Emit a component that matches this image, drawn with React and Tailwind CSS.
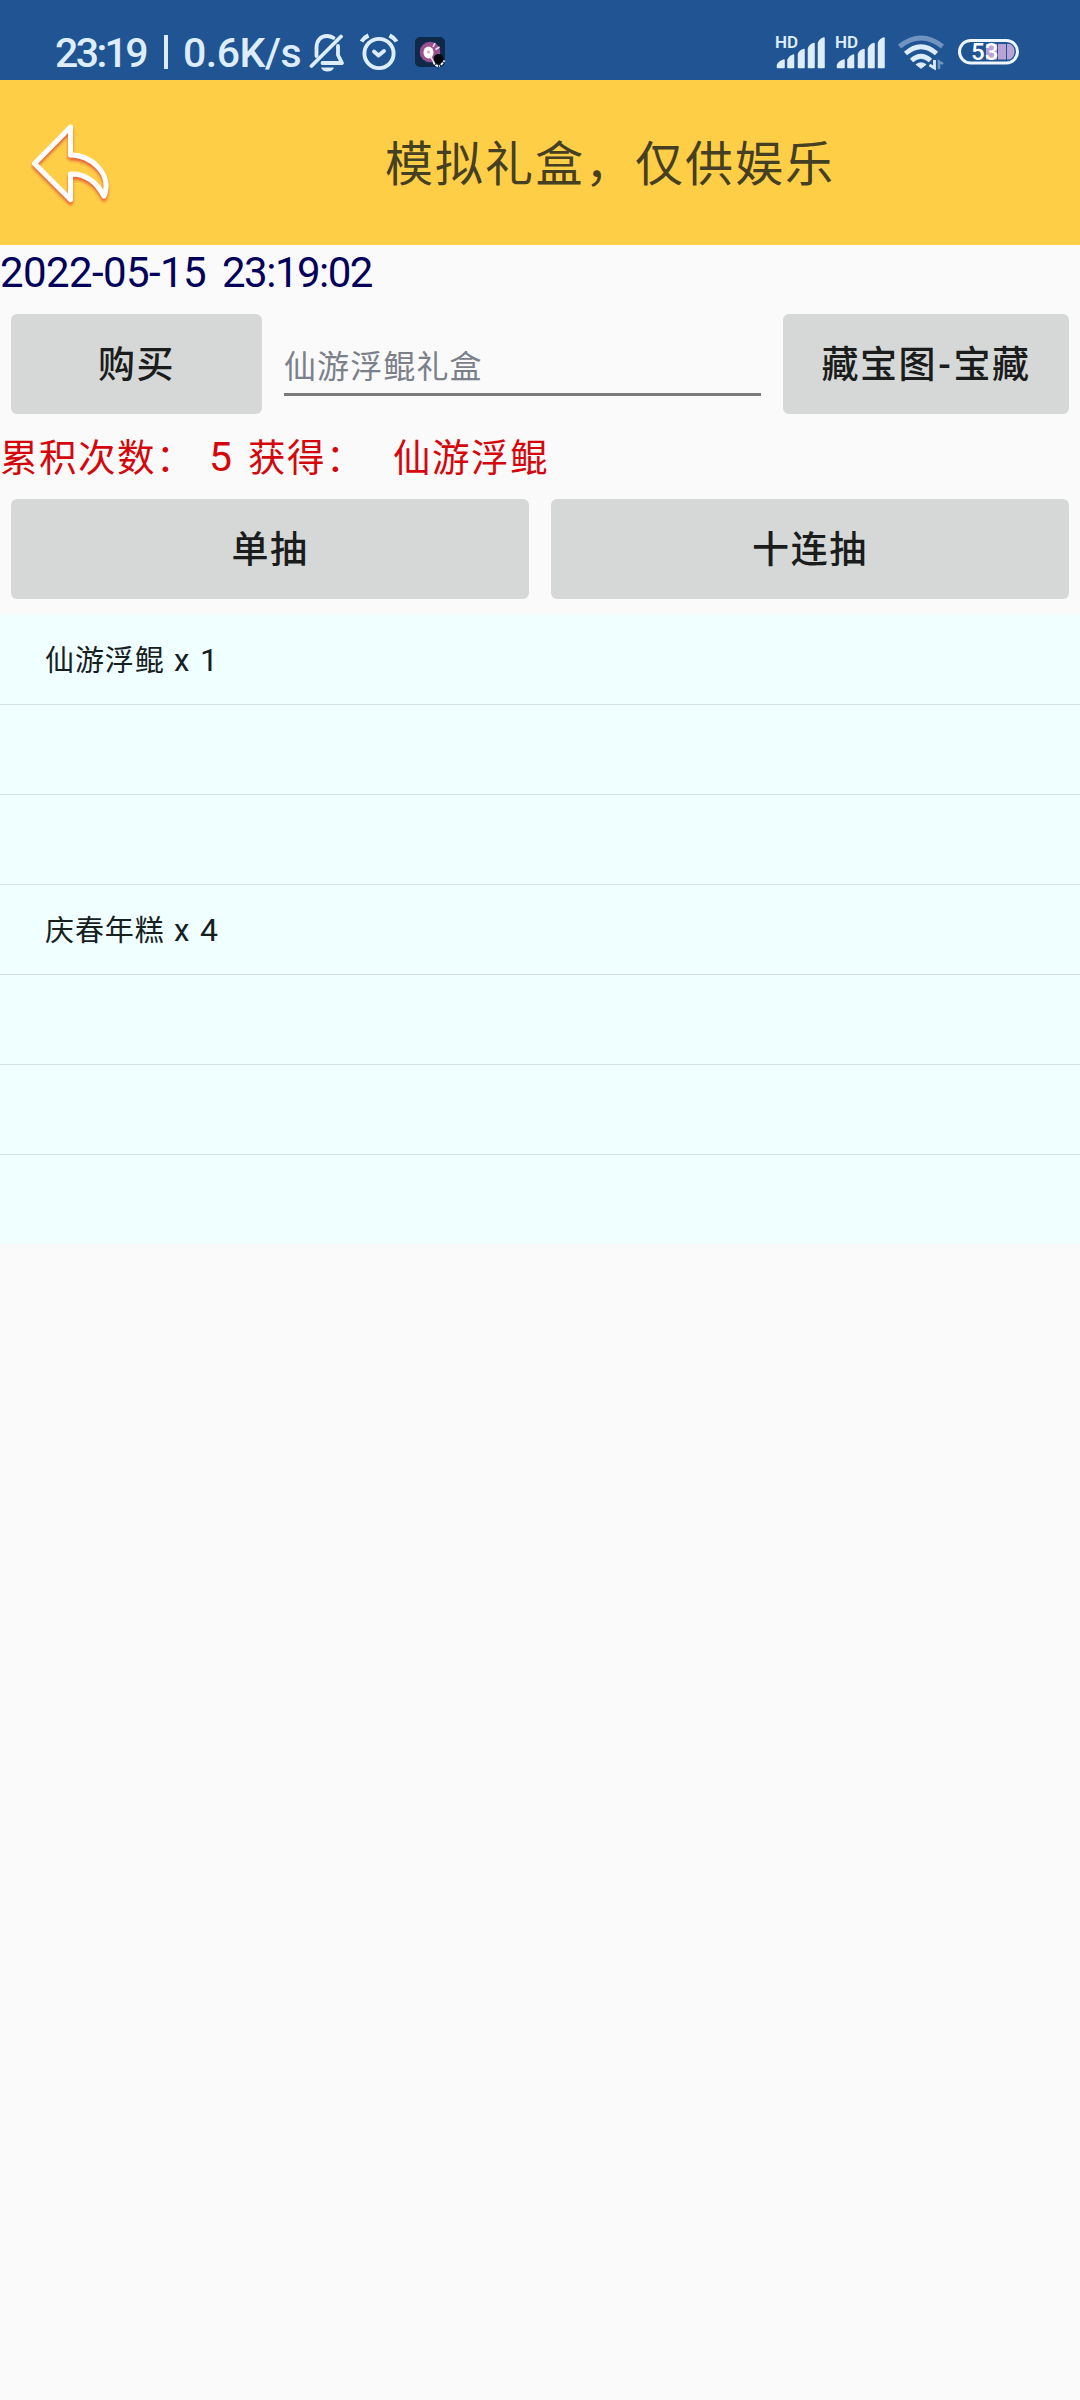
const ROWS = [["仙游浮鲲", "1"], null, null, ["庆春年糕", "4"], null, null, null];

const INK = "#deedfd";

function Signal() {
  return (
    <div className="relative h-[36px] w-[52px]">
      <span className="absolute top-[-1px] left-0 text-[17px] leading-[17px] font-semibold">HD</span>
      <svg width="52" height="36" viewBox="0 0 52 36" fill={INK}>
        <path d="M2.500 32.500V30Q4 26.500 9 25V32.500ZM13 32.500V24.500Q15 21 18.500 20V32.500ZM23.500 32.500V19Q25 15.500 29 14.500V32.500ZM33.500 32.500V13.500Q35 9.500 39 8.500V32.500ZM43.500 32.500V8Q45 4 49 3V32.500Z" stroke={INK} strokeWidth="1.500" strokeLinejoin="round" />
      </svg>
    </div>
  );
}

function BellOff() {
  return (
    <svg width="37" height="40" viewBox="0 0 37 40" fill="none" stroke={INK} strokeWidth="3.8" strokeLinecap="round" strokeLinejoin="round">
      <path d="M7.500 23V15C7.500 7 12 3 18 3C20.500 3 22.500 3.600 24.500 4.800" />
      <path d="M29 13V22L33 30H13.500" />
      <path d="M32 3.500L2.500 33" />
      <path d="M12 34.500H25Q23.500 38.500 18.500 38.500Q13.500 38.500 12 34.500Z" fill={INK} stroke="none" />
    </svg>
  );
}

function Alarm() {
  return (
    <svg width="40" height="38" viewBox="0 0 40 38" fill="none" stroke={INK} strokeWidth="3.900" strokeLinecap="round" strokeLinejoin="round">
      <circle cx="20" cy="20.500" r="14.600" />
      <path d="M15 18.500L19.500 22.500L25 18" />
      <path d="M2.500 8.500Q5 4.500 9.500 2.500M30.500 2.500Q35 4.500 37.500 8.500" strokeLinecap="butt" strokeWidth="4.200" />
    </svg>
  );
}

function AppBadge() {
  return (
    <svg width="31" height="31" viewBox="0 0 31 31">
      <rect width="30" height="30" rx="5" fill="#10284a" />
      <circle cx="15" cy="15" r="10.300" fill="#98508f" />
      <ellipse cx="13.500" cy="15.500" rx="5" ry="6" fill="#fff" />
      <circle cx="13.500" cy="15" r="1.500" fill="#d9a5cf" />
      <path d="M18 10l2-4M20.500 12.500l4-2.500M15 19l4 6" stroke="#f8def0" strokeWidth="1.600" />
      <circle cx="23.500" cy="22" r="5" fill="#05070c" />
      <path d="M18.500 24.500q1 5 6.500 4.500M26 28l3.500-4.500" stroke="#fff" strokeWidth="1.800" fill="none" strokeDasharray="3 1" />
    </svg>
  );
}

function Wifi() {
  return (
    <svg width="48" height="36" viewBox="0 0 48 36" fill="none" strokeWidth="4.800">
      <path d="M1.500 11.500Q23 -5.500 44.500 11.500" stroke="#7093c2" />
      <path d="M7.500 18.500Q23 5 38.500 18.500" stroke={INK} />
      <path d="M13.500 25.500Q23 17 32.500 25.500" stroke={INK} />
      <path d="M18.500 29.500Q23 26.500 27.500 29.500L23 33Z" fill={INK} stroke={INK} strokeWidth="1.500" strokeLinejoin="round" />
      <path d="M36.500 25V33L31.500 30" stroke={INK} strokeWidth="2.800" />
      <path d="M41 34V26.500L45 29" stroke="#7093c2" strokeWidth="2.600" />
    </svg>
  );
}

function Battery() {
  return (
    <div className="relative h-[26px] w-[61px]">
      <svg width="61" height="26" viewBox="0 0 61 26">
        <rect x="1.500" y="1.500" width="58" height="22.500" rx="11.200" fill="none" stroke="#eef6ff" strokeWidth="3" />
        <path d="M28 5H39V20.500H28ZM40 5H48V20.500H40ZM49 5H52Q56.500 7 56.500 12.500Q56.500 18 52 20.500H49Z" fill="#b9a2d6" />
      </svg>
      <span className="absolute top-0 left-[13px] text-[24px] leading-[26px] font-medium text-white">53</span>
    </div>
  );
}

function BackArrow() {
  return (
    <svg width="84" height="90" viewBox="0 0 84 90" fill="none" strokeWidth="5" strokeLinejoin="round">
      <defs>
        <filter id="glow" x="-20%" y="-20%" width="140%" height="140%">
          <feDropShadow dx="0" dy="3" stdDeviation="1.700" floodColor="#e2502d" floodOpacity="0.85" />
        </filter>
      </defs>
      <path filter="url(#glow)" stroke="#fff" d="M40.500 5L4.500 41.500L40.500 77.500V52C54 51.500 66 59 74 74C83 52 60 32 40.500 33Z" />
    </svg>
  );
}

function Btn({ children, className }) {
  return (
    <button className={`flex h-[100px] items-center justify-center rounded-[6px] bg-[#d6d8d7] pt-[3px] text-[37px] leading-none font-medium tracking-[1.6px] text-[#1b1c1c] ${className}`}>
      {children}
    </button>
  );
}

export default function App() {
  return (
    <div className="flex h-[2400px] w-[1080px] flex-col overflow-hidden bg-[#fafafa] font-['Roboto','Noto_Sans_CJK_SC',sans-serif] whitespace-pre">
      <div className="flex h-20 shrink-0 bg-[#205493] pr-[61px] pl-[55px] text-[#deedfd]">
        <div className="flex flex-1 pt-8">
          <div className="flex w-[254px] pt-px text-[41px] leading-[40px] font-medium">
            <span className="w-[105px] tracking-[-2.6px]">23:19</span>
            <span className="mt-[2px] ml-[4px] h-[34px] w-[4px] bg-[#deedfd]" />
            <span className="ml-[15px] tracking-[-0.5px]">0.6K/s</span>
          </div>
          <div className="flex gap-[13px] pt-px">
            <BellOff />
            <Alarm />
          </div>
          <div className="ml-[16px] pt-[5px]"><AppBadge /></div>
        </div>
        <div className="flex pt-[35px]">
          <div className="flex gap-[8px]"><Signal /><Signal /></div>
          <div className="ml-[11px]"><Wifi /></div>
          <div className="ml-[12px] pt-[4px]"><Battery /></div>
        </div>
      </div>

      <header className="flex h-[165px] shrink-0 items-center bg-[#ffce47]">
        <div className="ml-[30px] pt-[8px]"><BackArrow /></div>
        <h1 className="ml-[271px] pt-[4px] text-[48px] leading-none tracking-[2px] text-[#453f24]">模拟礼盒，仅供娱乐</h1>
      </header>

      <p className="flex h-[58px] shrink-0 pt-[6px] text-[42px] leading-[44px] text-[#03005a]">
        <span className="w-[222px] tracking-[-0.6px]">2022-05-15</span>
        <span className="tracking-[-1.5px]">23:19:02</span>
      </p>

      <div className="flex shrink-0 px-[11px] pt-[11px]">
        <Btn className="w-[251px]">购买</Btn>
        <div className="mx-[22px] flex h-[82px] flex-1 items-end border-b-[3px] border-[#7a7a7a] pb-[8px]">
          <span className="text-[32px] leading-[36px] tracking-[1.1px] text-[#7b818a]">仙游浮鲲礼盒</span>
        </div>
        <Btn className="w-[286px]">藏宝图<span className="mx-px">-</span>宝藏</Btn>
      </div>

      <p className="flex h-[85px] shrink-0 items-center pt-[3px] text-[37.500px] text-[#d4070c]">
        <span className="w-[209px] tracking-[1.500px]">累积次数：</span>
        <span className="w-[39px] text-[41px]">5</span>
        <span className="w-[145px] tracking-[1.500px]">获得：</span>
        <span className="tracking-[1.500px]">仙游浮鲲</span>
      </p>

      <div className="flex shrink-0 gap-[22px] px-[11px] pb-4">
        <Btn className="flex-1">单抽</Btn>
        <Btn className="flex-1">十连抽</Btn>
      </div>

      <ul className="shrink-0 divide-y divide-[#d3e2e2] bg-[#f0ffff]">
        {ROWS.map((row, i) => (
          <li key={i} className="box-content flex h-[89px] items-center pl-[45px] text-[29px] leading-none text-[#16201f]">
            {row && (
              <div className="flex items-baseline">
                <span className="w-[129px] tracking-[0.9px]">{row[0]}</span>
                <span className="w-[26px] text-[31px]">x</span>
                <span className="text-[32px]">{row[1]}</span>
              </div>
            )}
          </li>
        ))}
      </ul>
    </div>
  );
}
